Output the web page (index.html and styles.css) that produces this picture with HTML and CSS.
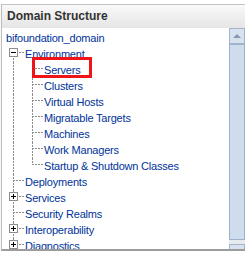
FILE: index.html
```html
<!DOCTYPE html>
<html>
<head>
  <title>Domain Structure</title>
  <link rel="stylesheet" href="styles.css">
</head>
<body>
  <div class="panel">
    <div class="panel-header">Domain Structure</div>
    <div class="panel-body">
      <ul class="tree">
        <li class="node"><span class="label">bifoundation_domain</span></li>
        <li class="node"><span class="branch first"><span class="toggle"></span></span><span class="label">Environment</span></li>
        <li class="node"><span class="branch pipe"></span><span class="branch sub"></span><span class="label marked">Servers</span></li>
        <li class="node"><span class="branch pipe"></span><span class="branch sub"></span><span class="label">Clusters</span></li>
        <li class="node"><span class="branch pipe"></span><span class="branch sub"></span><span class="label">Virtual Hosts</span></li>
        <li class="node"><span class="branch pipe"></span><span class="branch sub"></span><span class="label">Migratable Targets</span></li>
        <li class="node"><span class="branch pipe"></span><span class="branch sub"></span><span class="label">Machines</span></li>
        <li class="node"><span class="branch pipe"></span><span class="branch sub"></span><span class="label">Work Managers</span></li>
        <li class="node"><span class="branch pipe"></span><span class="branch sub last"></span><span class="label">Startup &amp; Shutdown Classes</span></li>
        <li class="node"><span class="branch"></span><span class="label">Deployments</span></li>
        <li class="node"><span class="branch"><span class="toggle plus"></span></span><span class="label">Services</span></li>
        <li class="node"><span class="branch"></span><span class="label">Security Realms</span></li>
        <li class="node"><span class="branch"><span class="toggle plus"></span></span><span class="label">Interoperability</span></li>
        <li class="node"><span class="branch last"><span class="toggle plus"></span></span><span class="label">Diagnostics</span></li>
      </ul>
      <div class="scrollbar">
        <div class="scroll-btn up"><span class="arrow"></span></div>
        <div class="scroll-thumb"></div>
        <div class="scroll-btn down"><span class="arrow"></span></div>
      </div>
    </div>
  </div>
</body>
</html>
```
FILE: styles.css
```css
html, body {
  overflow: hidden;
}

body {
  margin: 0;
  font-family: "Liberation Sans", Arial, sans-serif;
  background-color: #fff;
}

.panel {
  margin: 4px 0 0 1px;
  width: 243px;
  border-top: 1px solid #c2c2c2;
  border-left: 1px solid #bdbdbd;
  border-right: 1px solid #bdbdbd;
  border-bottom: 2px solid #9c9c9c;
  box-shadow: 0 1px 1px #d4d4d4;
}

.panel-header {
  height: 23px;
  line-height: 23px;
  padding-left: 5px;
  font-size: 12px;
  font-weight: bold;
  color: #333;
  background: linear-gradient(#f9f9f9, #e5e5e5);
}

.panel-body {
  display: flex;
  height: 221px;
  overflow: hidden;
}

/* tree */
.tree {
  flex: 1;
  margin: 0;
  padding: 2px 0 0 4px;
  list-style: none;
  overflow: hidden;
}

.node {
  display: flex;
  height: 16px;
  line-height: 16px;
  font-size: 11px;
  letter-spacing: -0.2px;
  white-space: nowrap;
}

.label {
  color: #003399;
  margin-left: 1px;
}

.node:first-child .label {
  margin-left: 0;
}

.branch {
  --x: 7px;
  --y: 6px;
  flex: none;
  display: flex;
  align-items: flex-start;
  width: 18px;
  height: 16px;
  background:
    repeating-linear-gradient(to bottom, #8c8c8c 0 2px, transparent 2px 3px) var(--x) 0 / 1px 16px no-repeat,
    repeating-linear-gradient(to right, #8c8c8c 0 2px, transparent 2px 3px) var(--x) var(--y) / 11px 1px no-repeat;
}

.branch.sub {
  --x: 8px;
  width: 19px;
}

.branch.first {
  background:
    repeating-linear-gradient(to bottom, #8c8c8c 0 2px, transparent 2px 3px) var(--x) var(--y) / 1px 10px no-repeat,
    repeating-linear-gradient(to right, #8c8c8c 0 2px, transparent 2px 3px) var(--x) var(--y) / 11px 1px no-repeat;
}

.branch.last {
  background:
    repeating-linear-gradient(to bottom, #8c8c8c 0 2px, transparent 2px 3px) var(--x) 0 / 1px 7px no-repeat,
    repeating-linear-gradient(to right, #8c8c8c 0 2px, transparent 2px 3px) var(--x) var(--y) / 11px 1px no-repeat;
}

.branch.pipe {
  background: repeating-linear-gradient(to bottom, #8c8c8c 0 2px, transparent 2px 3px) var(--x) 0 / 1px 16px no-repeat;
}

.toggle {
  display: grid;
  place-items: center;
  box-sizing: border-box;
  width: 9px;
  height: 9px;
  margin: 2px 0 0 3px;
  border: 1px solid #8d8d8d;
  background-color: #fff;
}

.toggle::before,
.toggle::after {
  content: "";
  grid-area: 1 / 1;
  background-color: #000;
}

.toggle::before {
  width: 5px;
  height: 1px;
}

.toggle.plus::after {
  width: 1px;
  height: 5px;
}

/* highlight drawn around Servers */
.marked {
  position: relative;
}

.marked::after {
  content: "";
  position: absolute;
  left: -12px;
  top: -5px;
  width: 60px;
  height: 21px;
  box-sizing: border-box;
  border: 3px solid #f01318;
}

/* scrollbar */
.scrollbar {
  display: flex;
  flex-direction: column;
  width: 16px;
  overflow: hidden;
  background-color: #e6e9ee;
}

.scroll-btn {
  flex: none;
  display: flex;
  align-items: center;
  justify-content: center;
  box-sizing: border-box;
  height: 16px;
  border: 1px solid #a2b4cb;
  background-color: #d8e2ef;
}

.scroll-btn.down {
  margin-top: 4px;
}

.arrow {
  width: 0;
  height: 0;
  border-left: 4px solid transparent;
  border-right: 4px solid transparent;
}

.up .arrow {
  border-bottom: 4px solid #8598b2;
}

.down .arrow {
  border-top: 4px solid #8598b2;
}

.scroll-thumb {
  flex: none;
  box-sizing: border-box;
  height: 196px;
  border: 1px solid #9db2cc;
  background-color: #cfdcee;
}
```
